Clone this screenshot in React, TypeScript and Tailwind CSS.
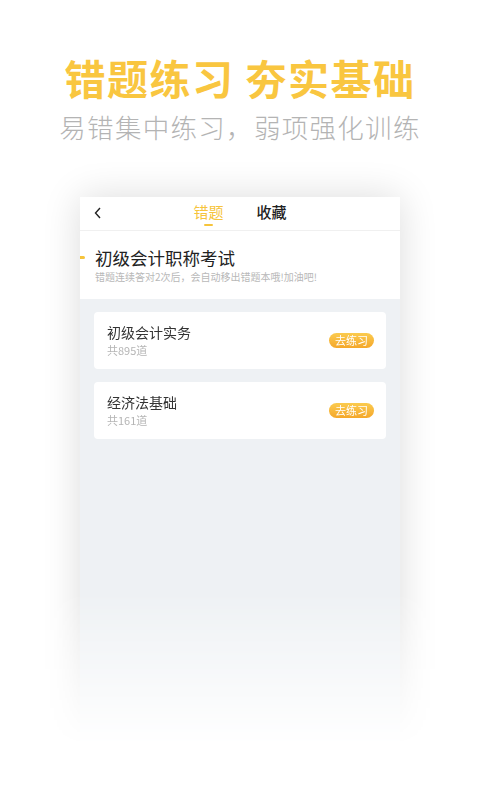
import React from "react";

const FONT = '"Noto Sans CJK SC", "Noto Sans", sans-serif';

function Card({ name, count }: { name: string; count: string }) {
  return (
    <div className="flex h-[57px] items-center justify-between rounded-[4px] bg-white pl-[13px] pr-[12px]">
      <div className="flex flex-col">
        <span className="text-[14px] leading-[20px] text-[#333]">{name}</span>
        <span className="text-[11px] leading-[16.5px] text-[#b5b5b5]">{count}</span>
      </div>
      <span className="flex h-[15px] w-[45px] items-center justify-center rounded-full bg-gradient-to-b from-[#fbcb4e] to-[#f4a72a] text-[11px] leading-none text-white">
        去练习
      </span>
    </div>
  );
}

export default function App() {
  return (
    <div
      className="flex h-[800px] w-[480px] flex-col items-center overflow-hidden bg-white"
      style={{ fontFamily: FONT }}
    >
      <div className="mt-[49px] text-[41px] font-bold leading-[56px] tracking-[1.5px] text-[#f9c640]">
        错题练习&nbsp;夯实基础
      </div>
      <div className="mt-[4px] text-[26.5px] font-light leading-[36px] tracking-[1.3px] text-[#b4b4b4]">
        易错集中练习，弱项强化训练
      </div>
      <div className="mt-[12px] w-[400px] px-[40px] pt-[40px] [mask-image:linear-gradient(to_bottom,black_0%,black_68%,transparent_92%)]">
        <div className="flex h-[600px] w-[320px] flex-col bg-[#eef1f4] shadow-[0_0_36px_rgba(0,0,0,0.14)]">
          <div className="relative flex h-[34px] items-start border-b border-[#f0f0f0] bg-white pt-[5px]">
            <svg
              className="absolute left-[14px] top-[10px]"
              width="8"
              height="12"
              viewBox="0 0 8 12"
              fill="none"
            >
              <path d="M6 1 L1.5 6 L6 11" stroke="#222" strokeWidth="1.4" />
            </svg>
            <div className="flex w-full justify-center gap-[33px]">
              <div className="relative flex flex-col items-center">
                <span className="text-[15px] leading-[20px] text-[#f6c43c]">错题</span>
                <span className="absolute top-[22px] h-[2px] w-[9px] rounded-full bg-[#f6c43c]" />
              </div>
              <span className="text-[15px] font-medium leading-[20px] text-[#222]">收藏</span>
            </div>
          </div>
          <div className="relative bg-white pb-[15px] pl-[15px] pt-[15px]">
            <span className="absolute left-0 top-[25px] h-[3px] w-[5px] rounded-r-full bg-[#f6c43c]" />
            <div className="text-[17.5px] leading-[24px] text-[#222]">初级会计职称考试</div>
            <div className="text-[10px] leading-[14px] text-[#b8b8b8]">
              错题连续答对2次后，会自动移出错题本哦!加油吧!
            </div>
          </div>
          <div className="flex flex-col gap-[13px] px-[14px] pt-[13px]">
            <Card name="初级会计实务" count="共895道" />
            <Card name="经济法基础" count="共161道" />
          </div>
        </div>
      </div>
    </div>
  );
}
